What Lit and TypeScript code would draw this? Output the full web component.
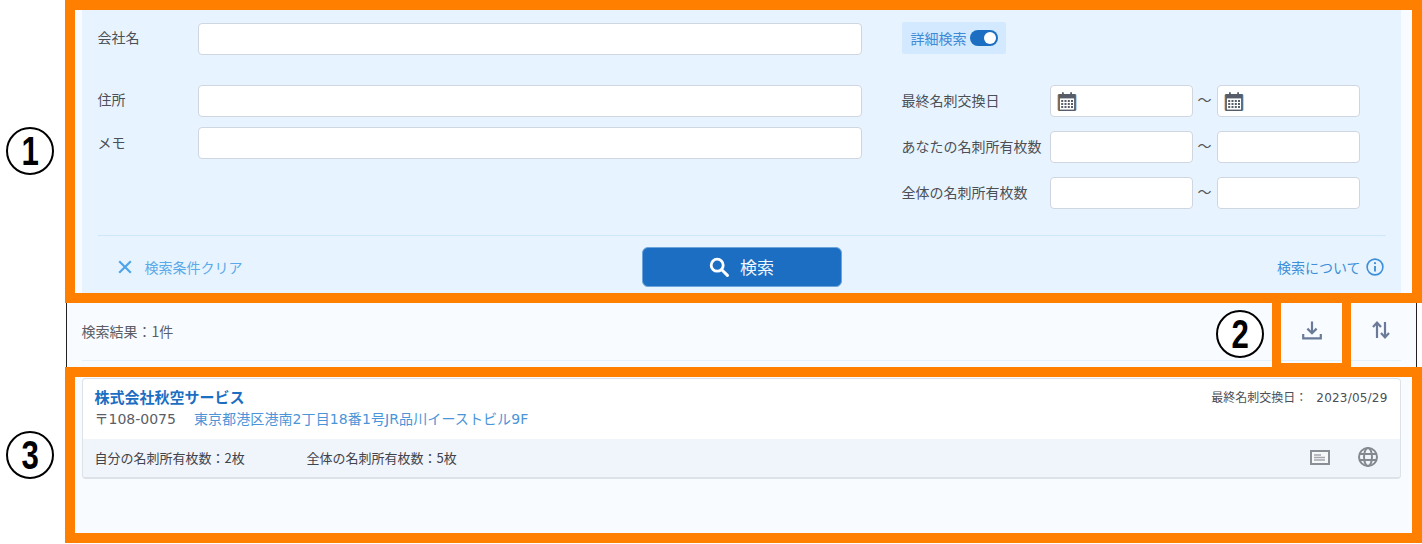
import { LitElement, html, css, svg } from "lit";
import { customElement } from "lit/decorators.js";

const calendar = html`<svg class="cal" viewBox="0 0 20 21" width="20" height="21" aria-hidden="true">
  <rect x=".6" y="3" width="17.6" height="17" rx="1.4" fill="#c9873f"/>
  <rect x="2.2" y="3" width="17.2" height="17" rx="1.4" fill="#4f97d8"/>
  <rect x="1.4" y="3" width="17.2" height="17" rx="1.2" fill="#565c68"/>
  <rect x="2.9" y="7.4" width="14.2" height="11.2" fill="#fff"/>
  <rect x="5" y="1" width="1.8" height="4" rx=".9" fill="#565c68"/>
  <rect x="13.2" y="1" width="1.8" height="4" rx=".9" fill="#565c68"/>
  ${[9, 12, 15].map((y) => [4.2, 7.5, 10.8, 14].map((x) => svg`<rect x=${x} y=${y} width="2" height="2" fill="#565c68"/>`))}
</svg>`;

@customElement("app-root")
export class AppRoot extends LitElement {
  static styles = css`
    :host {
      display: block;
      position: relative;
      height: 544px;
      width: 1422px;
      overflow: hidden;
      background: #fff;
      font-family: "Noto Sans CJK JP", "Noto Sans", sans-serif;
      font-size: 14px;
      color: #4b4f56;
    }
    * { box-sizing: border-box; }
    .shell {
      margin-left: 66px;
      width: 1350.5px;
      height: 543px;
      padding: 0 14.5px;
      background: #f8fbff;
      border-left: 1.5px solid #222;
      border-right: 1.5px solid #222;
    }
    .panel {
      width: 1319px;
      height: 293px;
      padding: 0 15px 0 16px;
      background: #e7f4ff;
      display: flex;
      flex-direction: column;
    }
    .form { display: flex; height: 235px; padding-top: 22.5px; }
    .left { width: 764px; margin-right: 40px; display: flex; flex-direction: column; }
    .lrow { display: flex; align-items: center; height: 32px; margin-bottom: 10.5px; }
    .lrow.first { margin-bottom: 30px; }
    .lrow .lab { width: 100px; margin-top: -3px; }
    .lrow.first .lab { margin-top: -4px; }
    .input {
      display: block;
      background: #fff;
      border: 1.5px solid #cfd6e0;
      border-radius: 4px;
      height: 32px;
      flex: 1;
    }
    .right { display: flex; flex-direction: column; margin-top: -1px; }
    .chip {
      align-self: flex-start;
      display: flex;
      align-items: center;
      gap: 3px;
      width: 104px;
      height: 32px;
      padding-left: 9px;
      background: #d3e9ff;
      border-radius: 2px;
      color: #3f8ad6;
      margin-bottom: 31.5px;
    }
    .toggle {
      display: block;
      position: relative;
      width: 28px;
      height: 16px;
      border-radius: 8px;
      background: #1b6ec2;
    }
    .toggle::after {
      content: "";
      position: absolute;
      right: 2px;
      top: 2px;
      width: 12px;
      height: 12px;
      border-radius: 50%;
      background: #fff;
    }
    .rrow { display: flex; align-items: center; height: 32px; margin-bottom: 14px; }
    .rrow .lab { width: 148px; white-space: nowrap; margin-top: -2px; }
    .rrow .input { flex: none; width: 143px; height: 32px; display: flex; align-items: center; padding-left: 6px; }
    .tilde { width: 24px; text-align: center; color: #555; font-size: 14px; margin-top: -5px; }
    .foot {
      border-top: 1.5px solid #cde8fb;
      display: grid;
      grid-template-columns: 1fr 200px 1fr;
      align-items: start;
      padding-top: 10.5px;
    }
    .clear { display: flex; align-items: center; height: 40px; padding-left: 20px; gap: 13px; color: #5aa9e8; }
    .btn {
      height: 40px;
      border-radius: 6px;
      background: #1b6ec2;
      color: #eef6ff;
      border: 1px solid #6ea4dc;
      display: flex;
      align-items: center;
      justify-content: center;
      gap: 11px;
      font-size: 17px;
    }
    .help {
      display: flex;
      align-items: center;
      justify-content: flex-end;
      gap: 5px;
      height: 40px;
      padding-right: 2px;
      color: #3d8fd9;
    }
    .bar {
      display: flex;
      align-items: center;
      height: 68px;
      width: 1319px;
      padding-top: 8px;
      border-bottom: 1.5px solid #e3f1fc;
      margin-bottom: 17px;
      color: #5a5e66;
    }
    .bar .count { flex: 1; }
    .ibtn { width: 69px; display: flex; justify-content: center; margin-top: -2px; }
    .ibtn.last { margin-right: -15px; }
    .card {
      width: 1319px;
      height: 101px;
      background: #fff;
      border: 1px solid #dde1e8;
      border-bottom-width: 2px;
      border-radius: 4px;
      display: flex;
      flex-direction: column;
      overflow: hidden;
    }
    .body { height: 60px; padding: 6px 12px 0; }
    .top { display: flex; justify-content: space-between; align-items: center; height: 22px; }
    .name { font-size: 15px; font-weight: 700; color: #1b6ec2; }
    .date { font-size: 12px; color: #4b4f56; }
    .date span { margin-left: 9px; letter-spacing: .2px; font-family: "DejaVu Sans", sans-serif; }
    .addr { display: flex; align-items: center; height: 22px; gap: 18px; font-family: "DejaVu Sans", "Noto Sans CJK JP", sans-serif; }
    .zip { color: #5a5e66; }
    .street { color: #4a95d8; letter-spacing: .1px; }
    .under {
      flex: 1;
      background: #f0f4fb;
      display: flex;
      align-items: center;
      padding: 0 22px 2px 12px;
      font-size: 13px;
      color: #3f434a;
    }
    .mine { width: 212px; }
    .all { flex: 1; }
    .icons { display: flex; align-items: center; gap: 28px; }
    .mark { position: absolute; border: 10px solid #ff8000; pointer-events: none; }
    .m1 { left: 65px; top: 0; width: 1357px; height: 303px; }
    .m2 { left: 1272px; top: 293px; width: 79px; height: 80px; border-width: 10px 9.5px; }
    .m3 { left: 65px; top: 367px; width: 1357px; height: 176px; }
    .num {
      position: absolute;
      width: 48px;
      height: 48px;
      border: 2px solid #000;
      border-radius: 50%;
      background: #fff;
      color: #000;
      display: flex;
      align-items: center;
      justify-content: center;
      font-family: "Liberation Sans", Arial, sans-serif;
      font-weight: 700;
      font-size: 40px;
      line-height: 1;
    }
    .num span { display: block; transform: scaleX(.78); }
    .n1 { left: 6px; top: 127px; }
    .n2 { left: 1216px; top: 309.5px; }
    .n3 { left: 6px; top: 431px; }
  `;

  render() {
    return html`
      <div class="shell">
        <section class="panel">
          <div class="form">
            <div class="left">
              <div class="lrow first"><span class="lab">会社名</span><span class="input"></span></div>
              <div class="lrow"><span class="lab">住所</span><span class="input"></span></div>
              <div class="lrow"><span class="lab">メモ</span><span class="input"></span></div>
            </div>
            <div class="right">
              <div class="chip">詳細検索<span class="toggle"></span></div>
              <div class="rrow"><span class="lab">最終名刺交換日</span><span class="input">${calendar}</span><span class="tilde">～</span><span class="input">${calendar}</span></div>
              <div class="rrow"><span class="lab">あなたの名刺所有枚数</span><span class="input"></span><span class="tilde">～</span><span class="input"></span></div>
              <div class="rrow"><span class="lab">全体の名刺所有枚数</span><span class="input"></span><span class="tilde">～</span><span class="input"></span></div>
            </div>
          </div>
          <div class="foot">
            <div class="clear">
              <svg width="14" height="14" viewBox="0 0 14 14"><path d="M1.2 1.2 12.8 12.8M12.8 1.2 1.2 12.8" stroke="#4ea5ea" stroke-width="2.2" fill="none"/></svg>
              検索条件クリア
            </div>
            <div class="btn">
              <svg width="20" height="20" viewBox="0 0 20 20"><circle cx="8.2" cy="8.2" r="6" stroke="#fff" stroke-width="2.8" fill="none"/><path d="M12.8 12.8 18.4 18.4" stroke="#fff" stroke-width="3" stroke-linecap="round"/></svg>
              検索
            </div>
            <div class="help">
              検索について
              <svg width="18" height="18" viewBox="0 0 18 18"><circle cx="9" cy="9" r="7.9" stroke="#3d8fd9" stroke-width="1.6" fill="none"/><circle cx="9" cy="5.2" r="1.1" fill="#3d8fd9"/><path d="M9 8v5.6" stroke="#3d8fd9" stroke-width="1.9"/></svg>
            </div>
          </div>
        </section>
        <div class="bar">
          <span class="count">検索結果：1件</span>
          <span class="ibtn">
            <svg width="20" height="20" viewBox="0 0 20 20" fill="none" stroke="#6b7a99" stroke-width="2.2"><path d="M10 1.5v11.5M5.4 8.6 10 13.2l4.6-4.6M1.2 14v4.4h17.6V14"/></svg>
          </span>
          <span class="ibtn last">
            <svg width="20" height="20" viewBox="0 0 20 20" fill="none" stroke="#6b7a99" stroke-width="2.2"><path d="M6 18V3M2 7l4-4.4L10 7M14 2v15M10 13l4 4.4 4-4.4"/></svg>
          </span>
        </div>
        <article class="card">
          <div class="body">
            <div class="top">
              <span class="name">株式会社秋空サービス</span>
              <span class="date">最終名刺交換日：<span>2023/05/29</span></span>
            </div>
            <div class="addr">
              <span class="zip">〒108-0075</span>
              <span class="street">東京都港区港南2丁目18番1号JR品川イーストビル9F</span>
            </div>
          </div>
          <div class="under">
            <span class="mine">自分の名刺所有枚数：2枚</span>
            <span class="all">全体の名刺所有枚数：5枚</span>
            <span class="icons">
              <svg width="20" height="15" viewBox="0 0 20 15"><rect x="1" y="1" width="18" height="13" fill="#f6f7f9" stroke="#8a8f96" stroke-width="2"/><path d="M4 5h7M4 7.5h11M4 10h11" stroke="#a3a7ad" stroke-width="1.4"/></svg>
              <svg width="20" height="20" viewBox="0 0 20 20" fill="none" stroke="#84898f" stroke-width="2"><circle cx="10" cy="10" r="9"/><ellipse cx="10" cy="10" rx="4" ry="9"/><path d="M1.6 7h16.8M1.6 13h16.8"/></svg>
            </span>
          </div>
        </article>
      </div>
      <div class="mark m1"></div>
      <div class="mark m2"></div>
      <div class="mark m3"></div>
      <div class="num n1"><span>1</span></div>
      <div class="num n2"><span>2</span></div>
      <div class="num n3"><span>3</span></div>
    `;
  }
}
